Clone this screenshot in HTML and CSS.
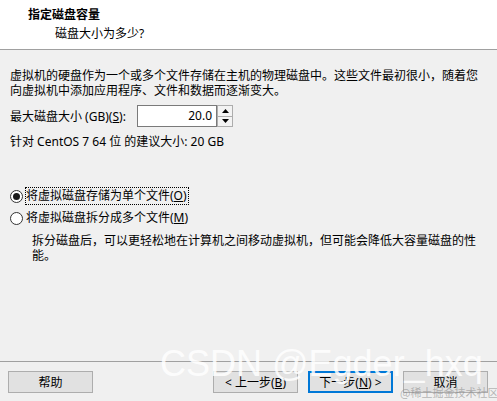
FILE: index.html
```html
<!DOCTYPE html>
<html lang="zh-CN">
    <head>
        <meta charset="UTF-8">
        <meta name="viewport" content="width=device-width, initial-scale=1.0">
        <title>新建虚拟机向导</title>
        <link rel="stylesheet" href="styles.css">
    </head>
    <body>
        <div class="wizard">
            <div class="header">
                <h1>指定磁盘容量</h1>
                <p>磁盘大小为多少?</p>
            </div>

            <div class="content">
                <p class="intro">虚拟机的硬盘作为一个或多个文件存储在主机的物理磁盘中。这些文件最初很小，随着您向虚拟机中添加应用程序、文件和数据而逐渐变大。</p>

                <div class="size-row">
                    <label class="size-label">最大磁盘大小 (GB)(<u>S</u>):</label>
                    <div class="spin">
                        <div class="spin-value">20.0</div>
                        <div class="spin-btns">
                            <span class="spin-btn">
                                <svg width="7" height="4" viewBox="0 0 7 4"><polygon points="3.5,0 7,4 0,4" fill="#000"/></svg>
                            </span>
                            <span class="spin-btn">
                                <svg width="7" height="4" viewBox="0 0 7 4"><polygon points="0,0 7,0 3.5,4" fill="#000"/></svg>
                            </span>
                        </div>
                    </div>
                </div>

                <p class="hint">针对 CentOS 7 64 位 的建议大小: 20 GB</p>

                <div class="options">
                    <div class="option">
                        <span class="radio checked"></span>
                        <span class="option-text focused">将虚拟磁盘存储为单个文件(<u>O</u>)</span>
                    </div>
                    <div class="option">
                        <span class="radio"></span>
                        <span class="option-text">将虚拟磁盘拆分成多个文件(<u>M</u>)</span>
                    </div>
                    <p class="option-note">拆分磁盘后，可以更轻松地在计算机之间移动虚拟机，但可能会降低大容量磁盘的性能。</p>
                </div>
            </div>

            <div class="footer">
                <button class="btn btn-help">帮助</button>
                <button class="btn">&lt; 上一步(<u>B</u>)</button>
                <button class="btn btn-default">下一步(<u>N</u>) &gt;</button>
                <button class="btn">取消</button>
            </div>

            <!-- screenshot watermarks -->
            <div class="watermark">CSDN @Egder_hxq</div>
            <div class="watermark-small">@稀土掘金技术社区</div>
        </div>
    </body>
</html>
```

FILE: styles.css
```css
* {
    box-sizing: border-box;
}

body {
    margin: 0;
    background: #f0f0f0;
    color: #000;
    font-family: "Noto Sans", "Noto Sans CJK SC", sans-serif;
    font-size: 12px;
}

.wizard {
    position: relative;
    height: 401px;
    display: flex;
    flex-direction: column;
    overflow: hidden;
}

.header {
    background: #fff;
    height: 50px;
    border-bottom: 1px solid #a0a0a0;
    padding: 7px 0 0 28px;
}

.header h1 {
    margin: 0;
    font-size: 12px;
    font-weight: bold;
    line-height: 15px;
}

.header p {
    margin: 4px 0 0 27px;
    line-height: 15px;
}

.content {
    flex: 1;
    padding: 18px 10px 0;
}

.intro {
    margin: 0;
    line-height: 15px;
}

.size-row {
    display: flex;
    align-items: center;
    height: 22px;
    margin-top: 7px;
}

.size-label {
    width: 127px;
}

.spin {
    display: flex;
    height: 22px;
}

.spin-value {
    width: 80px;
    border: 1px solid #7a7a7a;
    background: #fff;
    text-align: right;
    padding-right: 4px;
    line-height: 20px;
}

.spin-btns {
    display: flex;
    flex-direction: column;
    width: 16px;
}

.spin-btn {
    flex: 1;
    display: flex;
    align-items: center;
    justify-content: center;
    border: 1px solid #adadad;
    background: #f3f3f3;
}

.spin-btn + .spin-btn {
    border-top: none;
}

.hint {
    margin: 7px 0 0;
    line-height: 15px;
}

.options {
    margin-top: 36px;
}

.option {
    display: flex;
    align-items: center;
    height: 22px;
}

.radio {
    width: 13px;
    height: 13px;
    flex-shrink: 0;
    display: flex;
    align-items: center;
    justify-content: center;
    border: 1px solid #333;
    border-radius: 50%;
    background: #fff;
}

.radio.checked::after {
    content: "";
    width: 7px;
    height: 7px;
    border-radius: 50%;
    background: #1a1a1a;
}

.option-text {
    margin-left: 2px;
    padding-right: 1px;
    line-height: 16px;
    border: 1px dotted transparent;
}

.option-text.focused {
    border-color: #000;
}

.option-note {
    margin: 4px 0 0 22px;
    line-height: 15px;
}

.footer {
    display: flex;
    gap: 10px;
    border-top: 1px solid #a0a0a0;
    padding: 9px 9px 8px 8px;
}

.btn {
    width: 85px;
    height: 22px;
    display: flex;
    align-items: center;
    justify-content: center;
    padding: 0;
    border: 1px solid #adadad;
    background: #e1e1e1;
    color: #000;
    font: inherit;
}

.btn-help {
    margin-right: auto;
}

.btn-default {
    border-color: #0078d7;
    box-shadow: inset 0 0 0 1px #0078d7;
}

.watermark {
    position: absolute;
    left: 160px;
    top: 346px;
    font-family: "Liberation Sans", sans-serif;
    font-size: 36px;
    line-height: 36px;
    color: rgba(255, 255, 255, 0.85);
    white-space: nowrap;
}

.watermark-small {
    position: absolute;
    left: 400px;
    top: 386px;
    font-family: "Noto Sans CJK SC", sans-serif;
    font-size: 11px;
    line-height: 12px;
    color: rgba(140, 140, 140, 0.6);
    white-space: nowrap;
}
```
